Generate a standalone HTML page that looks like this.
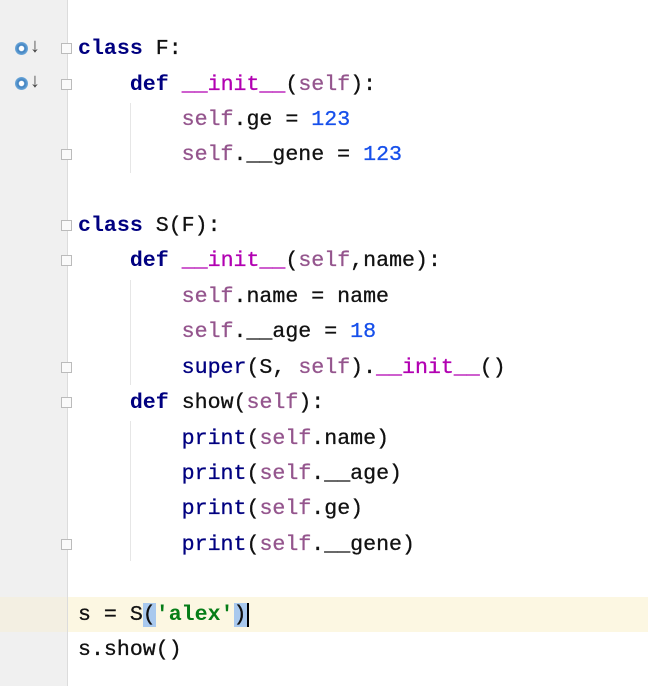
<!DOCTYPE html>
<html><head><meta charset="utf-8"><style>
html,body{margin:0;padding:0;}
body{width:648px;height:686px;background:#fff;position:relative;overflow:hidden;font-family:"Liberation Mono",monospace;}
.gut{position:absolute;left:0;top:0;width:67px;height:686px;background:#f0f0f0;}
.sep{position:absolute;left:67px;top:0;width:1px;height:686px;background:#dcdcdc;}
.hl{position:absolute;left:68px;top:597px;width:580px;height:35px;background:#fcf7e2;}
.hlg{position:absolute;left:0;top:597px;width:67px;height:35px;background:#f3efe2;}
.l{position:absolute;left:78px;font-size:21.6px;line-height:35px;height:35px;white-space:pre;color:#111;-webkit-text-stroke:0.3px currentColor;}
.k{color:#000080;font-weight:bold;-webkit-text-stroke:0;}
.s{color:#94558d;}
.n{color:#1750eb;}
.d{color:#b200b2;}
.str{color:#067d17;font-weight:bold;-webkit-text-stroke:0;}
.b{color:#000080;}
.g{position:absolute;width:1px;background:#e6e6e6;}
.f{position:absolute;left:61px;width:11px;height:11px;border:1px solid #bbb;background:#fafafa;box-sizing:border-box;}
.ic{position:absolute;left:15px;width:13px;height:13px;border-radius:50%;background:radial-gradient(circle,#fff 25%,#3b7fbf 35%,#8cc0e8 90%);}
.ar{position:absolute;left:29px;font-size:20px;color:#444;line-height:20px;}
.hb{background:#a9c9ee;}
.cur{border-right:2px solid #000;}
</style></head><body>
<div class="gut"></div><div class="sep"></div>
<div class="hlg"></div><div class="hl"></div>
<div class="ic" style="top:42px"></div><div class="ar" style="top:38px">↓</div>
<div class="ic" style="top:77px"></div><div class="ar" style="top:73px">↓</div>
<div class="f" style="top:43px"></div>
<div class="f" style="top:79px"></div>
<div class="f" style="top:149px"></div>
<div class="f" style="top:220px"></div>
<div class="f" style="top:255px"></div>
<div class="f" style="top:362px"></div>
<div class="f" style="top:397px"></div>
<div class="f" style="top:539px"></div>
<div class="g" style="left:130px;top:103px;height:70px"></div>
<div class="g" style="left:130px;top:280px;height:105px"></div>
<div class="g" style="left:130px;top:421px;height:140px"></div>
<div class="l" style="top:32px"><span class="k">class</span> F:</div>
<div class="l" style="top:68px">    <span class="k">def</span> <span class="d">__init__</span>(<span class="s">self</span>):</div>
<div class="l" style="top:103px">        <span class="s">self</span>.ge = <span class="n">123</span></div>
<div class="l" style="top:138px">        <span class="s">self</span>.__gene = <span class="n">123</span></div>
<div class="l" style="top:209px"><span class="k">class</span> S(F):</div>
<div class="l" style="top:244px">    <span class="k">def</span> <span class="d">__init__</span>(<span class="s">self</span>,name):</div>
<div class="l" style="top:280px">        <span class="s">self</span>.name = name</div>
<div class="l" style="top:315px">        <span class="s">self</span>.__age = <span class="n">18</span></div>
<div class="l" style="top:351px">        <span class="b">super</span>(S, <span class="s">self</span>).<span class="d">__init__</span>()</div>
<div class="l" style="top:386px">    <span class="k">def</span> show(<span class="s">self</span>):</div>
<div class="l" style="top:422px">        <span class="b">print</span>(<span class="s">self</span>.name)</div>
<div class="l" style="top:457px">        <span class="b">print</span>(<span class="s">self</span>.__age)</div>
<div class="l" style="top:492px">        <span class="b">print</span>(<span class="s">self</span>.ge)</div>
<div class="l" style="top:528px">        <span class="b">print</span>(<span class="s">self</span>.__gene)</div>
<div class="l" style="top:598px">s = S<span class="hb">(</span><span class="str">'alex'</span><span class="hb cur">)</span></div>
<div class="l" style="top:633px">s.show()</div>
</body></html>
